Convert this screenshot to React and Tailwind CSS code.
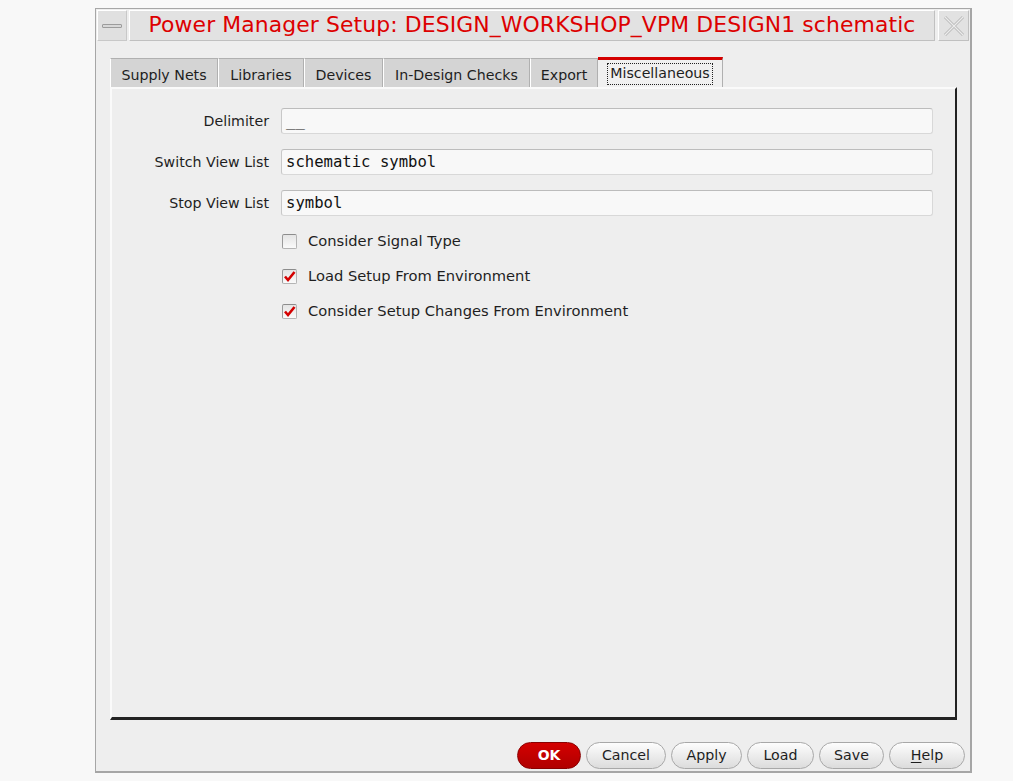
const tabs = [
  { label: 'Supply Nets', w: 'w-[108px]' },
  { label: 'Libraries', w: 'w-[86px]' },
  { label: 'Devices', w: 'w-[79px]' },
  { label: 'In-Design Checks', w: 'w-[147px]' },
  { label: 'Export', w: 'w-[68px]' },
];

const fields = [
  { label: 'Delimiter', value: '__' },
  { label: 'Switch View List', value: 'schematic symbol' },
  { label: 'Stop View List', value: 'symbol' },
];

const checks = [
  { label: 'Consider Signal Type', checked: false },
  { label: 'Load Setup From Environment', checked: true },
  { label: 'Consider Setup Changes From Environment', checked: true },
];

const buttons = [
  { label: 'Cancel', w: 'w-[80px]' },
  { label: 'Apply', w: 'w-[71px]' },
  { label: 'Load', w: 'w-[67px]' },
  { label: 'Save', w: 'w-[65px]' },
];

const CheckBox = ({ checked }) => (
  <div className="h-[15px] w-[15px] rounded-[2px] border border-[#b4b4b4] border-t-[#8c8c8c] border-l-[#9a9a9a] bg-gradient-to-b from-[#e4e4e4] to-[#fafafa] flex items-center justify-center">
    {checked && (
      <svg width="13" height="13" viewBox="0 0 13 13">
        <path d="M2 6.5 L5 10 L11.5 2" fill="none" stroke="#d40000" strokeWidth="2.6" strokeLinejoin="miter" />
      </svg>
    )}
  </div>
);

const App = () => {
  return (
    <div className="min-h-[781px] w-[1013px] bg-[#f8f8f8] pt-[8px] pl-[95px] font-['DejaVu_Sans',sans-serif]">
      <div className="w-[877px] h-[765px] border border-[#a6a6a6] border-r-2 border-b-2 bg-[#eeeeee] flex flex-col">
        {/* Title bar */}
        <div className="flex px-[1px] pt-[1px] h-[32px]">
          <div className="w-[30px] h-[31px] border border-[#c8c8c8] border-t-white border-l-white bg-[#e0e0e0] flex items-center justify-center">
            <div className="w-[20px] h-[4px] border border-[#9c9c9c] bg-[#d8d8d8] rounded-[1px]" />
          </div>
          <div className="ml-[2px] flex-1 h-[31px] border border-[#c0c0c0] border-t-white border-l-white bg-[#e2e2e2] flex items-center justify-center">
            <span className="text-[21.9px] text-[#dd0000] tracking-[0.1px]">
              Power Manager Setup: DESIGN_WORKSHOP_VPM DESIGN1 schematic
            </span>
          </div>
          <div className="ml-[3px] w-[31px] h-[31px] border border-[#c0c0c0] border-t-white border-l-white bg-[#e2e2e2] flex items-center justify-center">
            <svg width="22" height="22" viewBox="0 0 22 22">
              <path d="M2 2 L20 20 M20 2 L2 20" stroke="#b8b8b8" strokeWidth="3" />
              <path d="M2 2 L20 20 M20 2 L2 20" stroke="#ececec" strokeWidth="1.2" />
            </svg>
          </div>
        </div>

        {/* Tabs */}
        <div className="mt-[17px] ml-[14px] flex items-end h-[29px]">
          {tabs.map((t) => (
            <div
              key={t.label}
              className={`${t.w} h-[29px] border border-[#b0b0b0] border-l-white border-b-0 bg-[#d4d4d4] flex items-center justify-center text-[14.2px] text-[#1e1e1e]`}
            >
              <span className="mt-[5px]">{t.label}</span>
            </div>
          ))}
          <div className="w-[125px] h-[30px] border-t-[3px] border-[#d40000] bg-[#f0f0f0] border-r border-r-[#b0b0b0] flex items-center justify-center">
            <div className="border border-dotted border-[#222] px-[2px] h-[22px] flex items-center text-[14.2px] text-[#1e1e1e]">
              Miscellaneous
            </div>
          </div>
        </div>

        {/* Panel */}
        <div className="ml-[14px] w-[847px] h-[633px] border-l-2 border-t-2 border-l-[#fafafa] border-t-[#fafafa] border-r-2 border-b-[3px] border-r-[#222] border-b-[#222] pt-[19px] pr-[22px]">
          <div className="flex flex-col gap-[15px]">
            {fields.map((f) => (
              <div key={f.label} className="flex items-center">
                <div className="w-[158px] mt-[2px] text-right text-[14.2px] text-[#1e1e1e] pr-[1px]">{f.label}</div>
                <div className="ml-[11px] flex-1 h-[26px] rounded-[3px] border border-[#d8d8d8] border-t-[#bcbcbc] border-l-[#c8c8c8] bg-[#f8f8f8] flex items-center pl-[4px] pt-[1px] font-['DejaVu_Sans_Mono',monospace] text-[15.6px] text-[#111]">
                  {f.value}
                </div>
              </div>
            ))}
          </div>
          <div className="mt-[18px] ml-[170px] flex flex-col gap-[20px]">
            {checks.map((c) => (
              <div key={c.label} className="flex items-center h-[15px]">
                <CheckBox checked={c.checked} />
                <span className="ml-[11px] text-[14.7px] text-[#1e1e1e]">{c.label}</span>
              </div>
            ))}
          </div>
        </div>

        {/* Buttons */}
        <div className="mt-[22px] pr-[5px] flex justify-end gap-[5px]">
          <button className="w-[64px] h-[27px] rounded-full bg-gradient-to-b from-[#d40000] to-[#b00000] border border-[#8a0000] text-white font-bold text-[14px]">
            OK
          </button>
          {buttons.map((b) => (
            <button
              key={b.label}
              className={`${b.w} h-[27px] rounded-full bg-gradient-to-b from-[#fdfdfd] to-[#dcdcdc] border border-[#a8a8a8] text-[14.2px] text-[#1e1e1e]`}
            >
              {b.label}
            </button>
          ))}
          <button className="w-[76px] h-[27px] rounded-full bg-gradient-to-b from-[#fdfdfd] to-[#dcdcdc] border border-[#a8a8a8] text-[14.2px] text-[#1e1e1e]">
            <span className="underline underline-offset-2">H</span>elp
          </button>
        </div>
      </div>
    </div>
  );
};

export default App;
